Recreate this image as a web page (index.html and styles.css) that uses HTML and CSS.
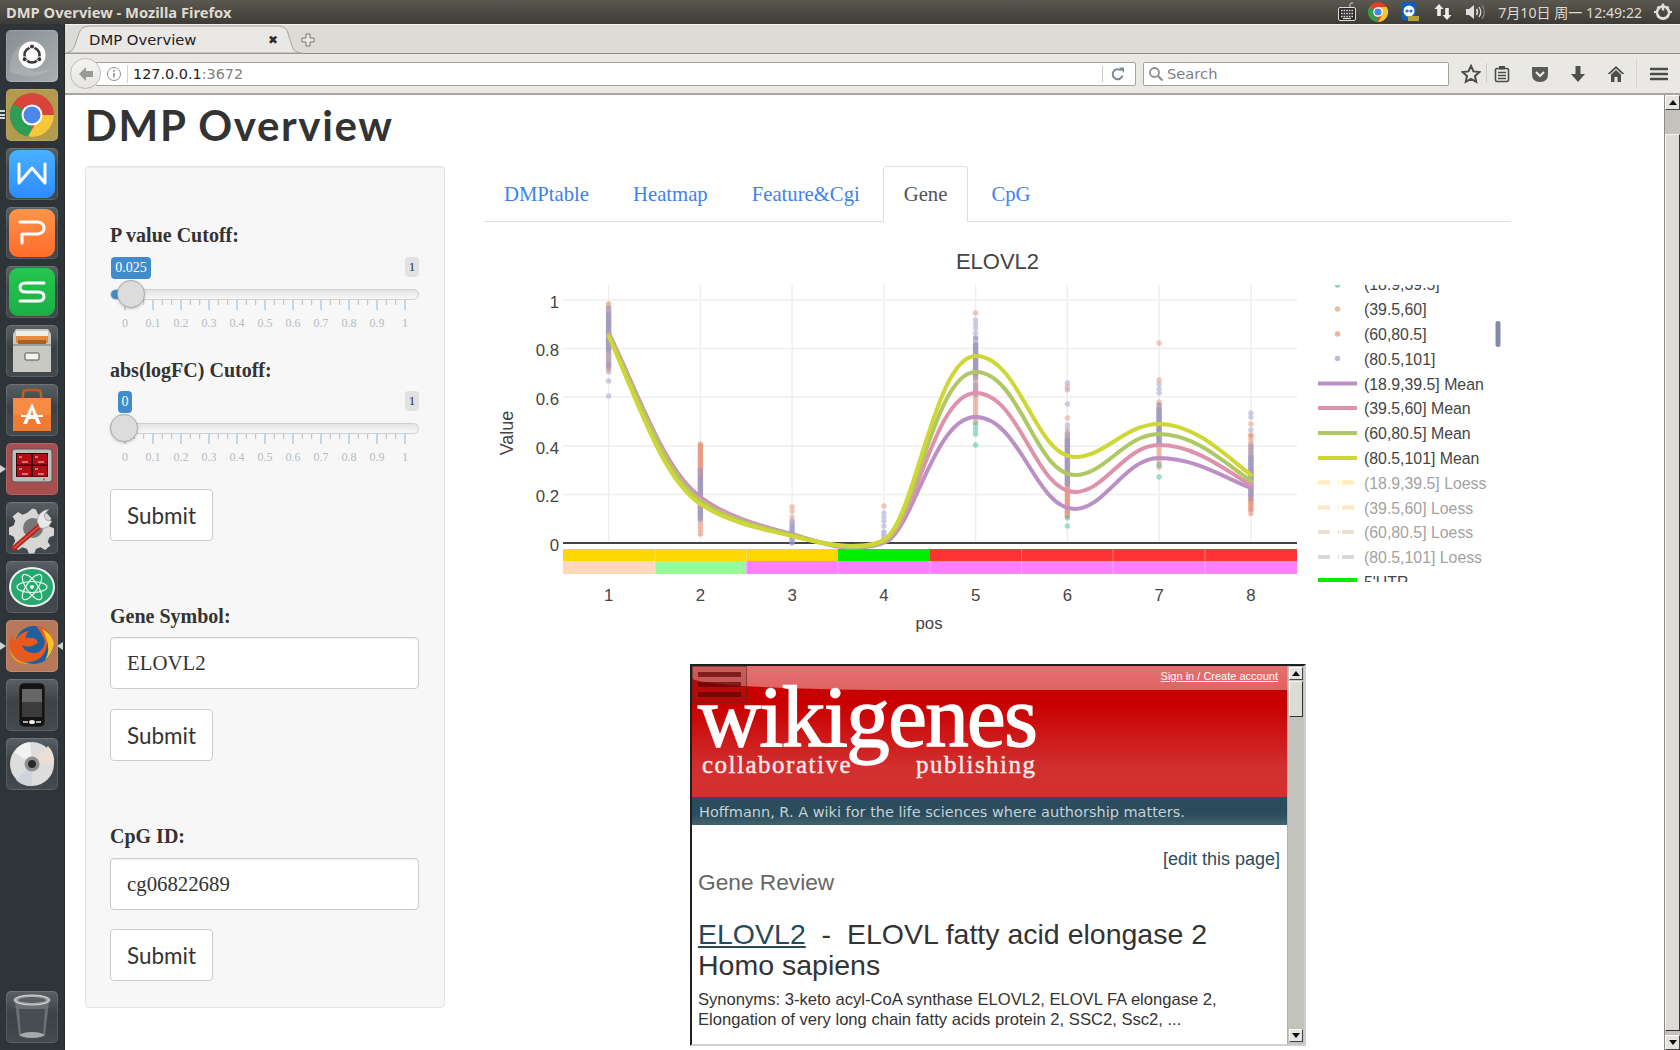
FILE: index.html
```html
<!DOCTYPE html>
<html lang="en">
<head>
<meta charset="utf-8">
<title>DMP Overview - Mozilla Firefox</title>
<link rel="stylesheet" href="styles.css">
</head>
<body>
<header class="topbar">
  <div class="wintitle">DMP Overview - Mozilla Firefox</div>
  <div class="tray">
    <svg class="ti kb" width="20" height="22" viewBox="0 0 20 22"><path d="M13 6V3.5Q13 2 15 2h1" fill="none" stroke="#ddd" stroke-width="1"/><rect x="1.5" y="6.5" width="17" height="13" rx="1.5" fill="#2c2b28" stroke="#ddd"/><path d="M4 9.5h12M4 12.5h12M4 15.5h12" stroke="#ddd" stroke-width="1.6" stroke-dasharray="1.6 1"/><path d="M6 17.5h8" stroke="#ddd" stroke-width="1.2"/></svg>
    <svg class="ti" width="22" height="22" viewBox="0 0 22 22"><circle cx="11" cy="11" r="10" fill="#e33e2b"/><path d="M11 11L2.3 16 8 20.5A10 10 0 0 0 11 21z" fill="#2f9e4f"/><path d="M2.3 6A10 10 0 0 0 6 19.7L11 11z" fill="#2f9e4f"/><path d="M11 6h8.7A10 10 0 0 1 11 21l4.3-7.5z" fill="#f7c52c"/><circle cx="11" cy="11" r="4.8" fill="#fff"/><circle cx="11" cy="11" r="3.6" fill="#4a86e8"/></svg>
    <svg class="ti" width="20" height="22" viewBox="0 0 20 22"><rect x="1" y="1" width="14" height="18" fill="#0a5fc4"/><circle cx="8" cy="10" r="5.5" fill="#fff"/><path d="M4 10l2.5-2v1.4h3V8l2.5 2-2.500 2v-1.400h-3V12z" fill="#0a5fc4"/><rect x="7" y="15" width="11" height="5" fill="#b5a23a"/></svg>
    <svg class="ti" width="20" height="22" viewBox="0 0 20 22"><path d="M6 3l4.500 5H7.800v7H4.200V8H1.500zM14 19l4.500-5h-2.700V7h-3.600v7H9.500z" fill="#eee"/></svg>
    <svg class="ti" width="22" height="22" viewBox="0 0 22 22"><path d="M1 8h3l5-4v14l-5-4H1z" fill="#ddd"/><path d="M11.500 8q2 3 0 6" fill="none" stroke="#ddd" stroke-width="1.500"/><path d="M14 6q3.500 5 0 10" fill="none" stroke="#ddd" stroke-width="1.300"/><path d="M17 4q4.500 7 0 14" fill="none" stroke="#8a8985" stroke-width="1.200"/></svg>
    <span class="clock">7月10日 周一 12:49:22</span>
    <svg class="ti gear" width="18" height="20" viewBox="0 0 18 20"><path d="M9 4.500a6 6 0 1 1-.01 0z" fill="none" stroke="#ddd" stroke-width="2.600"/><path d="M9 1.500v7" stroke="#ddd" stroke-width="2.400"/><path d="M9 2v3M9 15v3M2 10H0M18 10h-2M3.500 4.500l1.500 1.500M14.500 4.500L13 6M3.500 15.500L5 14M14.500 15.500L13 14" stroke="#ddd" stroke-width="2.200"/></svg>
  </div>
</header>
<div class="desktop">
  <aside class="launcher">
    <i class="pips"></i>
    <div class="tile dash"><svg viewBox="0 0 52 52"><path d="M4 42Q2 16 26 10q-14 12-6 26 8 10 26 2-16 14-42 4z" fill="#fff" opacity=".14"/><circle cx="26" cy="25" r="13.500" fill="#fff"/><circle cx="26" cy="25" r="7.500" fill="none" stroke="#3a3a3a" stroke-width="2.600"/><g fill="#3a3a3a" stroke="#fff"><circle cx="26" cy="16.500" r="2.500"/><circle cx="18.700" cy="29.200" r="2.500"/><circle cx="33.300" cy="29.200" r="2.500"/></g></svg></div>
    <div class="tile chrome"><svg viewBox="0 0 52 52"><circle cx="26" cy="26" r="22" fill="#d8433a"/><path d="M26 26L7 15A22 22 0 0 0 26 48z" fill="#2f9e55"/><path d="M26 26h22A22 22 0 0 1 22 47.600L32 30z" fill="#f6c73b"/><circle cx="26" cy="26" r="10.500" fill="#fff"/><circle cx="26" cy="26" r="8.500" fill="#4c86e8"/></svg></div>
    <div class="tile"><div class="app wps-w"><svg viewBox="0 0 46 48"><path d="M10 14V33L23 18 36 33V14" fill="none" stroke="#fff" stroke-width="3" stroke-linejoin="round" stroke-linecap="round"/></svg></div></div>
    <div class="tile"><div class="app wps-p"><svg viewBox="0 0 46 48"><path d="M13 34V25h16q6-1 6-6t-6-6H11" fill="none" stroke="#fff" stroke-width="3" stroke-linejoin="round" stroke-linecap="round"/></svg></div></div>
    <div class="tile"><div class="app wps-s"><svg viewBox="0 0 46 48"><path d="M35 15H17q-6 0-6 4.500t6 4.500h12q6 0 6 4.500T29 33H11" fill="none" stroke="#fff" stroke-width="3" stroke-linecap="round"/></svg></div></div>
    <div class="tile"><svg viewBox="0 0 52 52"><path d="M7 9l3-5h32l3 5v38H7z" fill="#c9c9c4"/><rect x="10" y="6" width="32" height="11" fill="#eeeeec"/><rect x="10" y="11" width="32" height="7" fill="#e98b3d"/><rect x="12" y="15" width="28" height="4" fill="#a5602b"/><path d="M7 19h38v2H7z" fill="#9c9c98"/><rect x="19" y="28" width="14" height="7" rx="1" fill="#f3f3f1" stroke="#555"/></svg></div>
    <div class="tile"><svg viewBox="0 0 52 52"><path d="M17 14v-4q0-4 4-4h10q4 0 4 4v4" fill="none" stroke="#c45a22" stroke-width="2.500"/><path d="M7 14h38v33H7z" fill="#ee7b34"/><path d="M7 14h38l-1 17H8z" fill="#f68b44"/><path d="M26 19l-9 21h4l2-5h6l2 5h4zM24.500 31l1.500-5 1.500 5z" fill="#fff"/><path d="M15 32h22" stroke="#fff" stroke-width="2"/></svg></div>
    <div class="tile redtile"><svg viewBox="0 0 52 52"><rect x="6" y="6" width="40" height="33" rx="3" fill="#bdbdb9" stroke="#555"/><rect x="10" y="10" width="32" height="24" fill="#3a0606"/><g fill="#b40d17"><rect x="11" y="11" width="14" height="10.500"/><rect x="27" y="11" width="14" height="10.500"/><rect x="11" y="23" width="14" height="10.500"/><rect x="27" y="23" width="14" height="10.500"/></g><path d="M13 14h3M29 14h3M13 26h3M29 26h3M16 19h6M32 19h6M16 31h6M32 31h6" stroke="#f3d7d7"/><circle cx="38" cy="36.500" r="1" fill="#d33"/></svg></div>
    <div class="tile"><svg viewBox="0 0 52 52"><path d="M26 5l4 1 2 5 5 2 5-3 5 6-3 5 1 4 5 2v8l-5 2-2 5 3 4-6 5-5-3-5 2-2 5h-6l-2-5-5-2-5 3-6-5 3-5-2-5-5-2v-8l5-2 2-5-3-5 6-5 5 3 5-2z" fill="#d6d6d4" transform="translate(3 2) scale(.9)"/><circle cx="27" cy="26" r="10" fill="#777"/><path d="M8 46l28-24" stroke="#b5261d" stroke-width="5" stroke-linecap="round"/><path d="M8 46l28-24" stroke="#e25a4f" stroke-width="1.500"/><path d="M31 19q1-10 12-12l-5 6 2 5 6 1q-4 9-12 7z" fill="#e9e9e7" stroke="#888" stroke-width=".6"/></svg></div>
    <div class="tile"><svg viewBox="0 0 52 52"><ellipse cx="26" cy="26" rx="23" ry="20" fill="#f1f4f2"/><ellipse cx="26" cy="26" rx="21" ry="18" fill="#27a86f"/><g fill="none" stroke="#e8f6ef" stroke-width="1.200"><ellipse cx="26" cy="26" rx="15" ry="5.500"/><ellipse cx="26" cy="26" rx="15" ry="5.500" transform="rotate(55 26 26)"/><ellipse cx="26" cy="26" rx="15" ry="5.500" transform="rotate(-55 26 26)"/></g><circle cx="26" cy="26" r="2" fill="#e8f6ef"/></svg></div>
    <div class="tile fftile"><svg viewBox="0 0 52 52"><circle cx="28" cy="25" r="19" fill="#1f5f9f"/><path d="M30 6q14 2 18 17-3-7-9-8 4 6 1 14-5 14-21 13-10-2-15-11Q1 24 7 15q0 5 2 6 5-9 14-10-4 4-3 7 5-1 10 1l2 4q-9 6-16 2 3 9 14 8 8-2 9-12-3-8-9-15z" fill="#e8591e"/><path d="M36 9q9 4 12 14-2 12-9 17 6-10 1-22-2-6-4-9z" fill="#fbc123"/><path d="M4 27q2 15 20 17-13 1-18-8-2-4-2-9z" fill="#f5a21a"/></svg></div>
    <div class="tile"><svg viewBox="0 0 52 52"><rect x="13" y="4" width="26" height="44" rx="5" fill="#141414" stroke="#555" stroke-width=".6"/><rect x="16" y="10" width="20" height="28" fill="#3c3c3c"/><path d="M16 10h20v13H16z" fill="#666"/><path d="M17 43h5M30 43h5" stroke="#ddd" stroke-width="1.500"/><ellipse cx="26" cy="43" rx="3" ry="2" fill="#eee"/></svg></div>
    <div class="tile"><svg viewBox="0 0 52 52"><circle cx="26" cy="26" r="22" fill="#ddd"/><path d="M26 26L42 8A22 22 0 0 1 48 26z" fill="#eadfd6"/><path d="M26 26L10 42A22 22 0 0 0 26 48z" fill="#cfd3da"/><path d="M26 26L8 14A22 22 0 0 1 24 4z" fill="#f2f2f2"/><circle cx="26" cy="26" r="7.500" fill="#8f8f8f"/><circle cx="26" cy="26" r="4" fill="#2a2a2a"/></svg></div>
    <div class="tile trash"><svg viewBox="0 0 52 52"><path d="M9 11h34l-4 34H13z" fill="#6a7074"/><path d="M13 18l2 26h22l2-26z" fill="#474d51"/><ellipse cx="26" cy="9" rx="18" ry="5" fill="#a8acad" stroke="#d6d6d4"/><ellipse cx="26" cy="9" rx="14" ry="3" fill="#5a5f63"/><ellipse cx="26" cy="44" rx="12" ry="3" fill="#a8aaa9"/></svg></div>
    <i class="arrow a1"></i><i class="arrow a2"></i><i class="arrow a3"></i>
  </aside>
  <div class="browser">
    <div class="tabstrip">
      <div class="fftab">
        <svg class="tabshape" width="236" height="29" viewBox="0 0 236 29"><path d="M0 28q6 0 9-8L13 8Q15 1 24 1h188q8 0 10 7l4 13q2 7 10 7z" fill="#e9e8e4" stroke="#a5a39c"/></svg>
        <span class="tabname">DMP Overview</span>
        <span class="tabclose">✖</span>
      </div>
      <svg class="plus" width="14" height="14" viewBox="0 0 14 14"><path d="M5 1h4v4h4v4H9v4H5V9H1V5h4z" fill="#e9e8e4" stroke="#77766f"/></svg>
    </div>
    <div class="navbar">
      <div class="urlbar">
        <svg class="info" width="16" height="16" viewBox="0 0 16 16"><circle cx="8" cy="8" r="6.500" fill="none" stroke="#8e8e8e"/><path d="M8 7v4.500" stroke="#8e8e8e" stroke-width="1.600"/><circle cx="8" cy="4.800" r="1" fill="#8e8e8e"/></svg>
        <span class="urltext">127.0.0.1<span class="urlport">:3672</span></span>
        <span class="urlsep"></span>
        <svg class="reload" width="16" height="16" viewBox="0 0 16 16"><path d="M12.500 9.500A5 5 0 1 1 11 4.500" fill="none" stroke="#7a8a99" stroke-width="2"/><path d="M9 1.500h5v5.500z" fill="#7a8a99"/></svg>
      </div>
      <button class="backbtn" aria-label="Back"><svg width="18" height="18" viewBox="0 0 18 18"><path d="M9 2L2 9l7 7V12h7V6H9z" fill="#9a9a96"/></svg></button>
      <div class="searchbar">
        <svg width="16" height="16" viewBox="0 0 16 16"><circle cx="6.500" cy="6.500" r="4.500" fill="none" stroke="#8e8e8e" stroke-width="1.800"/><path d="M10 10l4.500 4.500" stroke="#8e8e8e" stroke-width="2.200"/></svg>
        <span>Search</span>
      </div>
      <div class="navicons">
        <svg class="star" width="20" height="20" viewBox="0 0 20 20"><path d="M10 2l2.500 5.400 5.900.7-4.400 4 1.200 5.800L10 15l-5.200 2.900L6 12.100l-4.400-4 5.900-.7z" fill="none" stroke="#4b4b49" stroke-width="2"/></svg>
        <i class="vsep s1"></i>
        <svg class="clip" width="16" height="18" viewBox="0 0 16 18"><rect x="1.500" y="3.500" width="13" height="13" rx="1.500" fill="none" stroke="#4b4b49" stroke-width="1.600"/><rect x="5" y="1" width="6" height="3.500" fill="#4b4b49"/><path d="M4 7.500h8M4 10.500h8M4 13.500h8" stroke="#4b4b49" stroke-width="1.500"/></svg>
        <svg class="pocket" width="18" height="18" viewBox="0 0 18 18"><path d="M1 2h16v7q0 8-8 8T1 9z" fill="#5a5a58"/><path d="M5 7l4 4 4-4" fill="none" stroke="#e9e8e4" stroke-width="2.200"/></svg>
        <svg class="down" width="16" height="18" viewBox="0 0 16 18"><path d="M5.500 1h5v8H15l-7 8-7-8h4.500z" fill="#4f4f4d"/></svg>
        <svg class="home" width="18" height="18" viewBox="0 0 18 18"><path d="M9 1L0.500 9h2.500L9 3.500 15 9h2.500z" fill="#4f4f4d"/><path d="M9 5l-5 4.500V17h3.500v-5h3v5H14V9.500z" fill="#4f4f4d"/></svg>
        <i class="vsep s2"></i>
        <svg class="menu" width="18" height="14" viewBox="0 0 18 14"><path d="M1 2h16M1 7h16M1 12h16" stroke="#4b4b49" stroke-width="2.600" stroke-linecap="round"/></svg>
      </div>
    </div>
    <div class="viewport">
      <main class="page">
        <h1 class="pagetitle">DMP Overview</h1>
        <div class="columns">
          <form class="sidebar">
            <label class="lab first">P value Cutoff:</label>
            <div class="slider">
              <div class="badges"><span class="maxbadge">1</span></div>
              <span class="valbadge v1">0.025</span>
              <div class="track"><div class="fill f1"></div></div>
              <div class="handle h1"></div>
              <svg class="ticks" width="309" height="36" viewBox="110 0 309 36">
                <path class="minor" d="M134.300 0v5M143.700 0v5M162.300 0v5M171.700 0v5M190.300 0v5M199.700 0v5M218.300 0v5M227.700 0v5M246.300 0v5M255.700 0v5M274.300 0v5M283.700 0v5M302.300 0v5M311.700 0v5M330.300 0v5M339.700 0v5M358.300 0v5M367.700 0v5M386.300 0v5M395.700 0v5"/>
                <path class="major" d="M125 0v10M153 0v10M181 0v10M209 0v10M237 0v10M265 0v10M293 0v10M321 0v10M349 0v10M377 0v10M405 0v10"/>
                <g class="ticklab"><text x="125" y="27">0</text><text x="153" y="27">0.1</text><text x="181" y="27">0.2</text><text x="209" y="27">0.3</text><text x="237" y="27">0.4</text><text x="265" y="27">0.5</text><text x="293" y="27">0.6</text><text x="321" y="27">0.7</text><text x="349" y="27">0.8</text><text x="377" y="27">0.9</text><text x="405" y="27">1</text></g>
              </svg>
            </div>
            <label class="lab second">abs(logFC) Cutoff:</label>
            <div class="slider">
              <div class="badges"><span class="maxbadge">1</span></div>
              <span class="valbadge v2">0</span>
              <div class="track"></div>
              <div class="handle h2"></div>
              <svg class="ticks" width="309" height="36" viewBox="110 0 309 36">
                <path class="minor" d="M134.300 0v5M143.700 0v5M162.300 0v5M171.700 0v5M190.300 0v5M199.700 0v5M218.300 0v5M227.700 0v5M246.300 0v5M255.700 0v5M274.300 0v5M283.700 0v5M302.300 0v5M311.700 0v5M330.300 0v5M339.700 0v5M358.300 0v5M367.700 0v5M386.300 0v5M395.700 0v5"/>
                <path class="major" d="M125 0v10M153 0v10M181 0v10M209 0v10M237 0v10M265 0v10M293 0v10M321 0v10M349 0v10M377 0v10M405 0v10"/>
                <g class="ticklab"><text x="125" y="27">0</text><text x="153" y="27">0.1</text><text x="181" y="27">0.2</text><text x="209" y="27">0.3</text><text x="237" y="27">0.4</text><text x="265" y="27">0.5</text><text x="293" y="27">0.6</text><text x="321" y="27">0.7</text><text x="349" y="27">0.8</text><text x="377" y="27">0.9</text><text x="405" y="27">1</text></g>
              </svg>
            </div>
            <button type="button" class="submit s-first">Submit</button>
            <label class="lab section">Gene Symbol:</label>
            <input class="field" value="ELOVL2">
            <button type="button" class="submit">Submit</button>
            <label class="lab section last">CpG ID:</label>
            <input class="field" value="cg06822689">
            <button type="button" class="submit final">Submit</button>
          </form>
          <section class="content">
            <nav class="tabs">
              <a class="tablink">DMPtable</a>
              <a class="tablink">Heatmap</a>
              <a class="tablink">Feature&amp;Cgi</a>
              <a class="tablink active">Gene</a>
              <a class="tablink">CpG</a>
            </nav>
            <svg class="plot" width="1027" height="442" viewBox="484 222 1027 442">
              <defs><clipPath id="lg"><rect x="1310" y="285" width="200" height="297"/></clipPath></defs>
              <text class="ptitle" x="997.500" y="269">ELOVL2</text>
              <path class="grid" d="M608.600 285V543M700.400 285V543M792.100 285V543M883.900 285V543M975.600 285V543M1067.400 285V543M1159.100 285V543M1250.900 285V543"/>
              <path class="grid" d="M563 300H1297M563 348.500H1297M563 397H1297M563 446H1297M563 494.500H1297"/>
              <g class="bars">
                <rect x="563" y="549" width="275" height="12" fill="#ffd700"/>
                <rect x="838" y="549" width="92" height="12" fill="#00ee00"/>
                <rect x="930" y="549" width="367" height="12" fill="#ff3333"/>
                <rect x="563" y="561" width="92" height="13" fill="#ffd7b9"/>
                <rect x="655" y="561" width="91" height="13" fill="#98fb98"/>
                <rect x="746" y="561" width="551" height="13" fill="#ff80ff"/>
                <path d="M655 549v25M746.500 549v25M838 561v13M930 561v13M1021.500 549v25M1113 549v25M1205 549v25" stroke="#fff" stroke-opacity=".35"/>
              </g>
              <path class="zero" d="M563 543H1297"/>
              <g class="dots">
                <path class="d-b" d="M608.600 381h0M608.600 396h0M608.600 372h0M608.600 365h0"/>
                <path class="col c-o" d="M608.600 304V372"/><path class="col c-b" d="M608.600 308V368"/><path class="col c-b" d="M608.600 315V352"/>
                <path class="col c-o" d="M700.400 444V534"/><path class="col c-o" d="M700.400 446V480"/><path class="col c-b" d="M700.400 470V522"/><path class="col c-b" d="M700.400 480V518"/>
                <path class="d-o" d="M792.100 507h0M792.100 511h0M792.100 517h0M792.100 523h0"/><path class="col c-b" d="M792.100 521V544"/><path class="col c-b" d="M792.100 527V544"/>
                <path class="d-o" d="M883.900 506h0"/><path class="d-b" d="M883.900 513h0M883.900 517h0M883.900 521h0M883.900 526h0"/><path class="col c-b" d="M883.900 532V544"/>
                <path class="d-o" d="M975.600 313h0"/><path class="d-b" d="M975.600 320h0M975.600 324h0M975.600 328h0M975.600 333h0M975.600 338h0"/>
                <path class="col c-o" d="M975.600 345V425"/><path class="col c-b" d="M975.600 338V380"/><path class="col c-b" d="M975.600 345V375"/><path class="col c-b" d="M975.600 385V395"/>
                <path class="d-t" d="M975.600 424h0M975.600 428h0M975.600 431h0M975.600 434h0M975.600 445h0"/>
                <path class="d-b" d="M1067.400 383h0M1067.400 390h0M1067.400 404h0M1067.400 425h0M1067.400 428h0"/><path class="d-o" d="M1067.400 387h0M1067.400 418h0"/>
                <path class="col c-o" d="M1067.400 432V518"/><path class="col c-b" d="M1067.400 434V486"/><path class="col c-b" d="M1067.400 440V485"/><path class="col c-o" d="M1067.400 488V516"/>
                <path class="d-t" d="M1067.400 518h0M1067.400 526h0"/>
                <path class="d-o" d="M1159.100 343h0M1159.100 380h0M1159.100 402h0"/><path class="d-b" d="M1159.100 384h0M1159.100 389h0M1159.100 393h0"/>
                <path class="col c-o" d="M1159.100 405V470"/><path class="col c-b" d="M1159.100 405V445"/><path class="col c-b" d="M1159.100 410V442"/>
                <path class="d-t" d="M1159.100 465h0M1159.100 477h0"/>
                <path class="d-b" d="M1250.900 413h0M1250.900 417h0M1250.900 430h0"/><path class="d-o" d="M1250.900 424h0M1250.900 435h0"/>
                <path class="col c-o" d="M1250.900 436V514"/><path class="col c-b" d="M1250.900 446V500"/><path class="col c-b" d="M1250.900 458V498"/><path class="col c-o" d="M1250.900 500V512"/>
              </g>
              <g class="means">
                <path stroke="#bc8fc5" d="M608.600 333C640 397 665 472 700.400 497C725 516 760 526 792 534C815 541 835 548 851 548C868 548 878 546 888 541C915 522 935 417 975.600 417C1020 417 1035 509 1075 509C1105 509 1125 458 1159 458C1195 458 1225 478 1251 488"/>
                <path stroke="#de93ac" d="M608.600 334C640 398 665 474 700.400 499C725 517 760 527 792 535C815 541 835 547 851 547C868 547 878 545 887 540C915 521 935 393 975.600 393C1020 393 1035 492 1075 492C1105 492 1125 445 1159 445C1195 445 1225 470 1251 485"/>
                <path stroke="#afc864" d="M608.600 335C640 400 665 476 700.400 501C725 519 760 527 792 535C815 541 835 547 851 547C868 547 878 545 886 540C915 520 935 372 975.600 372C1020 372 1035 475 1075 475C1105 475 1125 434 1159 434C1195 434 1225 463 1251 481"/>
                <path stroke="#cfd736" d="M608.600 336C638 402 663 480 700.400 504C725 521 760 529 792 536C815 542 835 546 851 546C868 546 878 544 885 539C915 519 935 356 975.600 356C1020 356 1035 457 1075 457C1105 457 1125 424 1159 424C1195 424 1225 455 1251 475"/>
              </g>
              <g class="axlab">
                <text class="ytick" x="559" y="308">1</text><text class="ytick" x="559" y="356">0.8</text><text class="ytick" x="559" y="405">0.6</text><text class="ytick" x="559" y="454">0.4</text><text class="ytick" x="559" y="502">0.2</text><text class="ytick" x="559" y="551">0</text>
                <text class="xtick" x="608.600" y="601">1</text><text class="xtick" x="700.400" y="601">2</text><text class="xtick" x="792.100" y="601">3</text><text class="xtick" x="883.900" y="601">4</text><text class="xtick" x="975.600" y="601">5</text><text class="xtick" x="1067.400" y="601">6</text><text class="xtick" x="1159.100" y="601">7</text><text class="xtick" x="1250.900" y="601">8</text>
                <text class="xtick" x="929" y="629">pos</text>
                <text class="xtick vlab" transform="translate(513 433) rotate(-90)">Value</text>
              </g>
              <g clip-path="url(#lg)" class="legend">
                <path class="lg-dot" stroke="#8dd3be" d="M1337.500 285h0"/><text x="1364" y="290">(18.9,39.5]</text>
                <path class="lg-dot" stroke="#e3bfa3" d="M1337.500 309h0"/><text x="1364" y="314.500">(39.5,60]</text>
                <path class="lg-dot" stroke="#efb3a0" d="M1337.500 334h0"/><text x="1364" y="339.500">(60,80.5]</text>
                <path class="lg-dot" stroke="#b9bddb" d="M1337.500 358.500h0"/><text x="1364" y="364.500">(80.5,101]</text>
                <path class="lg-line" stroke="#bc8fc5" d="M1318 383.500h39"/><text x="1364" y="389.500">(18.9,39.5] Mean</text>
                <path class="lg-line" stroke="#de93ac" d="M1318 408h39"/><text x="1364" y="413.500">(39.5,60] Mean</text>
                <path class="lg-line" stroke="#afc864" d="M1318 433h39"/><text x="1364" y="438.500">(60,80.5] Mean</text>
                <path class="lg-line" stroke="#cfd736" d="M1318 458h39"/><text x="1364" y="463.500">(80.5,101] Mean</text>
                <g class="off">
                  <path class="lg-dash" stroke="#fedc62" d="M1318 482.500h36"/><text x="1364" y="488.500">(18.9,39.5] Loess</text>
                  <path class="lg-dash" stroke="#f8cf8d" d="M1318 507.500h36"/><text x="1364" y="513.500">(39.5,60] Loess</text>
                  <path class="lg-dash" stroke="#d9c3a5" d="M1318 532h36"/><text x="1364" y="537.500">(60,80.5] Loess</text>
                  <path class="lg-dash" stroke="#b3b3b3" d="M1318 557h36"/><text x="1364" y="562.500">(80.5,101] Loess</text>
                </g>
                <path class="lg-bar" d="M1318 581.500h39"/><text x="1364" y="587.500">5'UTR</text>
              </g>
              <rect class="lgscroll" x="1495.500" y="321" width="5" height="26" rx="2"/>
            </svg>
            <div class="frame">
              <div class="framepage">
                <div class="wghead">
                  <div class="gloss"></div>
                  <div class="wgmenu"><i></i><i></i><i></i></div>
                  <a class="signin">Sign in / Create account</a>
                  <div class="wordmark">wikigenes</div>
                  <div class="subs"><span>collaborative</span><span>publishing</span></div>
                </div>
                <div class="wgtag">Hoffmann, R. A wiki for the life sciences where authorship matters.</div>
                <div class="wgbody">
                  <a class="edit">[edit this page]</a>
                  <div class="review">Gene Review</div>
                  <h2 class="genename"><a>ELOVL2</a>&nbsp; - &nbsp;ELOVL fatty acid elongase 2<br>Homo sapiens</h2>
                  <p class="syn">Synonyms: 3-keto acyl-CoA synthase ELOVL2, ELOVL FA elongase 2, Elongation of very long chain fatty acids protein 2, SSC2, Ssc2, ...</p>
                </div>
              </div>
              <div class="framescroll">
                <span class="sb-btn small up"></span>
                <span class="sb-thumb small"></span>
                <span class="sb-grow"></span>
                <span class="sb-btn small dn"></span>
              </div>
            </div>
          </section>
        </div>
      </main>
      <div class="pagescroll">
        <span class="sb-btn up"></span>
        <span class="sb-track"></span>
        <span class="sb-thumb big"></span>
        <span class="sb-track tiny"></span>
        <span class="sb-btn dn"></span>
      </div>
    </div>
  </div>
</div>
</body>
</html>
```
FILE: styles.css
```css
* { box-sizing: border-box; }
html, body { margin: 0; height: 100%; }
body { width: 1680px; height: 1050px; overflow: hidden; display: flex; flex-direction: column; background: #fff; font-family: "Liberation Serif", serif; color: #333; }

/* top panel */
.topbar { height: 24px; flex: none; display: flex; align-items: center; justify-content: space-between; background: linear-gradient(#5b5850, #3c3b35); padding: 0 8px 0 6px; }
.wintitle { font: 700 14.700px "Noto Sans", sans-serif; color: #dfdbd2; white-space: nowrap; }
.tray { display: flex; align-items: center; }
.ti { display: block; margin-right: 12px; }
.kb { margin-right: 10px; }
.clock { font: 14.100px "Noto Sans", "Noto Sans CJK SC", sans-serif; color: #dfdbd2; margin: 0 12px 0 -1px; white-space: nowrap; }
.gear { margin-right: 0; }

.desktop { flex: 1; display: flex; min-height: 0; }

/* launcher */
.launcher { width: 65px; flex: none; background: #2e3539; padding-top: 6px; display: flex; flex-direction: column; align-items: flex-start; position: relative; border-right: 1px solid #23282b; }
.tile { width: 52px; height: 52px; margin: 0 0 7px 6px; border-radius: 5px; background: linear-gradient(#5a6064, #3b4145 45%, #454a4e); box-shadow: inset 0 0 0 1px rgba(255,255,255,.12); display: flex; align-items: center; justify-content: center; flex: none; overflow: hidden; }
.tile > svg { width: 52px; height: 52px; display: block; }
.dash { background: linear-gradient(135deg, #868e91, #aab0b2); }
.chrome { background: #b29a4e; }
.redtile { background: #a84e50; }
.fftile { background: #b8795a; }
.trash { margin-top: auto; margin-bottom: 7px; }
.app { width: 46px; height: 48px; border-radius: 9px; }
.app svg { width: 46px; height: 48px; display: block; }
.wps-w { background: linear-gradient(#48b0ff, #2e8cff); }
.wps-p { background: linear-gradient(#ff9448, #ff6c2c); }
.wps-s { background: linear-gradient(#26c64e, #1aaf46); }
.pips { position: absolute; left: 0; top: 86px; width: 5px; height: 9px; background: repeating-linear-gradient(#d8d8d8 0 2px, transparent 2px 3.5px); }
.arrow { position: absolute; width: 0; height: 0; border-top: 4px solid transparent; border-bottom: 4px solid transparent; }
.a1 { left: 0; top: 441px; border-left: 6px solid #cfd2d3; }
.a2 { left: 0; top: 618px; border-left: 6px solid #cfd2d3; }
.a3 { right: 1px; top: 618px; border-right: 6px solid #cfd2d3; }

/* browser chrome */
.browser { flex: 1; min-width: 0; display: flex; flex-direction: column; }
.tabstrip { height: 30px; flex: none; background: #dcdbd5; border-top: 1px solid #f4f3ef; border-bottom: 1px solid #8f8d87; display: flex; align-items: flex-end; padding-left: 1px; }
.fftab { position: relative; width: 236px; height: 29px; display: flex; align-items: center; padding: 0 24px 0 23px; justify-content: space-between; margin-bottom: -1px; }
.tabshape { position: absolute; left: 0; top: 0; }
.tabname, .tabclose { position: relative; }
.tabname { font: 14.800px "DejaVu Sans", sans-serif; color: #222; }
.tabclose { font: 12px "DejaVu Sans", sans-serif; color: #2c2c2c; }
.plus { margin: 0 0 6px -1px; }
.navbar { height: 41px; flex: none; background: #e9e8e4; border-bottom: 2px solid #a8a69f; display: flex; align-items: center; padding-left: 5px; position: relative; }
.backbtn { position: absolute; left: 5px; top: 4px; width: 31px; height: 31px; padding: 0; border-radius: 50%; border: 1px solid #bdbcb6; background: linear-gradient(#f5f4f1, #e6e5e1); display: flex; align-items: center; justify-content: center; }
.urlbar { margin-left: 25px; width: 1041px; height: 24px; background: #fff; border: 1px solid #a5a39c; border-radius: 2px; display: flex; align-items: center; padding-left: 10px; }
.info { margin-right: 5px; flex: none; }
.urltext { border-left: 1px solid #d2d2d0; padding-left: 5px; height: 18px; font: 14.400px/18px "DejaVu Sans", sans-serif; color: #222; }
.urlport { color: #808080; }
.urlsep { margin-left: auto; width: 1px; height: 16px; background: #c8c8c6; }
.reload { margin: 0 9px 0 7px; }
.searchbar { margin-left: 7px; width: 306px; height: 24px; background: #fff; border: 1px solid #a5a39c; border-radius: 2px; display: flex; align-items: center; padding-left: 4px; gap: 3px; font: 14.700px "DejaVu Sans", sans-serif; color: #808080; }
.navicons { flex: 1; position: relative; height: 100%; }
.navicons svg, .vsep { position: absolute; }
.star { left: 12px; top: 10px; }
.s1 { left: 37px; top: 9px; width: 1px; height: 20px; background: #cfcec9; }
.clip { left: 45px; top: 11px; }
.pocket { left: 82px; top: 11px; }
.down { left: 121px; top: 11px; }
.home { left: 158px; top: 11px; }
.s2 { left: 187px; top: 4px; width: 1px; height: 30px; background: #d6d5d0; }
.menu { left: 201px; top: 13px; }

.viewport { flex: 1; min-height: 0; display: flex; }
.page { flex: 1; min-width: 0; padding-left: 20px; overflow: hidden; }
.pagetitle { margin: 0; height: 71px; font: 700 42px/60px Lato, sans-serif; letter-spacing: 1.650px; color: #333; }
.columns { display: flex; gap: 39px; align-items: flex-start; }

/* sidebar */
.sidebar { width: 360px; flex: none; height: 842px; background: #f7f7f7; border: 1px solid #e3e3e3; border-radius: 4px; box-shadow: inset 0 1px 1px rgba(0,0,0,.05); padding: 57px 25px 0 24px; display: flex; flex-direction: column; align-items: flex-start; }
.lab { display: block; font: 700 20px/23px "Liberation Serif", serif; color: #333; margin-bottom: 10px; }
.second { margin-top: 1px; margin-bottom: 9px; }
.section { margin-top: 64px; margin-bottom: 9px; }
.last { margin-bottom: 10px; }
.slider { position: relative; width: 309px; height: 75px; margin-bottom: 26px; }
.slider + .submit { margin-top: -3px; }
.badges { display: flex; justify-content: flex-end; height: 32px; }
.maxbadge { width: 14px; height: 20px; background: #e1e1e1; border-radius: 4px; text-align: center; font: 13px/20px "Liberation Serif", serif; color: #333; }
.valbadge { position: absolute; top: 0; height: 22px; background: #428bca; color: #fff; border-radius: 4px; text-align: center; font: 14px/21px "Liberation Serif", serif; }
.v1 { left: 1px; width: 40px; }
.v2 { left: 8px; width: 14px; }
.track { height: 11px; border: 1px solid #cfcfcf; border-radius: 6px; background: linear-gradient(#e4e4e4, #f8f8f8); position: relative; overflow: hidden; }
.fill { position: absolute; left: 0; top: 0; bottom: 0; background: #428bca; }
.f1 { width: 16px; }
.handle { position: absolute; width: 28px; height: 28px; top: 22.5px; border-radius: 50%; background: #dcdcdc; border: 1px solid #ababab; box-shadow: 0 1px 3px rgba(0,0,0,.2); }
.h1 { left: 7px; }
.h2 { left: 0; }
.ticks { display: block; }
.minor { stroke: #bdbdbd; stroke-width: 1; }
.major { stroke: #9dc3e2; stroke-width: 1.2; }
.ticklab text { font: 12px "Liberation Serif", serif; fill: #b4bcc4; text-anchor: middle; }
.submit { width: 103px; height: 52px; background: #fff; border: 1px solid #ccc; border-radius: 4px; font: 22.500px Lato, sans-serif; color: #333; padding: 0; margin-top: 20px; }
.s-first { margin-top: 0; }
.final { margin-top: 19px; }
.field { width: 309px; height: 52px; background: #fff; border: 1px solid #ccc; border-radius: 4px; font: 20.800px "Liberation Serif", serif; color: #333; padding: 0 16px; box-shadow: inset 0 1px 1px rgba(0,0,0,.075); margin: 0; display: block; }

/* main */
.content { width: 1027px; flex: none; }
.tabs { height: 56px; display: flex; align-items: flex-end; border-bottom: 1px solid #ddd; padding-left: 0; }
.tablink { height: 56px; padding: 0 20px; font: 20.700px/54px "Liberation Serif", serif; color: #4080f0; margin-right: 2px; margin-bottom: -1px; border: 1px solid transparent; }
.tablink:first-child { margin-left: -1px; }
.active { background: #fff; color: #555; border-color: #ddd; border-bottom-color: #fff; border-radius: 4px 4px 0 0; }
.plot { display: block; }
.plot text { font-family: "Liberation Sans", sans-serif; }
.ptitle { font-size: 22px; fill: #444; text-anchor: middle; }
.grid { stroke: #eee; stroke-width: 1.5; fill: none; }
.zero { stroke: #444; stroke-width: 2; }
.dots path { fill: none; stroke-linecap: round; stroke-width: 5.5; opacity: .55; }
.dots .col { stroke-dasharray: 0 3.100; }
.c-o { stroke: #e4866a; }
.c-b { stroke: #8f94c6; }
.d-o { stroke: #e59c82; }
.d-b { stroke: #a3a8d0; }
.d-t { stroke: #55c3a2; }
.means path { fill: none; stroke-width: 4; stroke-linecap: round; }
.ytick { font-size: 16.800px; fill: #444; text-anchor: end; }
.xtick { font-size: 16.800px; fill: #444; text-anchor: middle; }
.vlab { font-size: 18px; }
.legend text { font-size: 15.850px; fill: #444; }
.off { opacity: .5; }
.lg-dot { fill: none; stroke-width: 5.500; stroke-linecap: round; }
.lg-line { fill: none; stroke-width: 4; }
.lg-dash { fill: none; stroke-width: 4; stroke-dasharray: 12 8 1 3 12; }
.lg-bar { stroke: #00ee00; stroke-width: 7; }
.lgscroll { fill: #808ba5; }

/* embedded frame */
.frame { width: 616px; height: 382px; margin-left: 206px; display: flex; border-style: solid; border-width: 2px; border-color: #1f1f1f #cfcfcf #cfcfcf #1f1f1f; background: #fff; }
.framepage { flex: 1; min-width: 0; overflow: hidden; }
.wghead { height: 131px; position: relative; overflow: hidden; background: linear-gradient(#c90000 0, #c90000 30%, #d23030 78%, #d32f2f); }
.gloss { position: absolute; left: 0; right: 0; top: 0; height: 24px; background: linear-gradient(#e56f6f, #df6464); border-bottom-left-radius: 35% 12px; }
.wgmenu { position: absolute; left: 0; top: 0; width: 55px; height: 37px; background: rgba(120,40,40,.25); border: 1px solid rgba(100,30,30,.55); padding: 5px 5px; display: flex; flex-direction: column; gap: 5px; }
.wgmenu i { display: block; height: 5px; background: rgba(90,0,0,.65); }
.signin { position: absolute; right: 9px; top: 4px; font: 11px "Liberation Sans", sans-serif; color: #fff; text-decoration: underline; }
.wordmark { position: absolute; left: 6px; top: 16px; font: 400 87px/70px "Liberation Serif", serif; letter-spacing: -1.600px; color: #fff; -webkit-text-stroke: 1.400px #fff; white-space: nowrap; }
.subs { position: absolute; left: 10px; top: 89px; display: flex; gap: 64px; font: 400 25px/20px "Liberation Serif", serif; letter-spacing: 1.500px; color: #fbe9e9; -webkit-text-stroke: .4px #fbe9e9; }
.wgtag { height: 28px; background: linear-gradient(#2a4c5c 60%, #44626f); color: #c5d2d7; font: 14.500px/30px "DejaVu Sans", sans-serif; padding-left: 7px; white-space: nowrap; }
.wgbody { padding: 0 7px 0 6px; font-family: "Liberation Sans", sans-serif; }
.edit { display: block; text-align: right; font-size: 18px; line-height: 22px; color: #2b4c5e; padding-top: 23px; box-sizing: content-box; }
.review { font-size: 22.700px; line-height: 26px; color: #666; margin-top: -1px; }
.genename { font-weight: 400; font-size: 28.500px; line-height: 31px; margin: 24px 0 0; color: #333; }
.genename a { color: #26495c; text-decoration: underline; }
.syn { font-size: 16.600px; line-height: 19.500px; margin: 9px 0 0; color: #333; }

.framescroll { width: 17px; flex: none; background: #c3c2bc; display: flex; flex-direction: column; padding: 1px 1px 2px; border-left: 1px solid #b0afaa; }
.sb-btn { flex: none; height: 15px; background: #e5e4e0; border: 1px solid #fff; border-right-color: #444; border-bottom-color: #444; position: relative; display: block; }
.sb-btn.small { height: 13px; }
.sb-btn::after { content: ""; position: absolute; left: 50%; top: 50%; margin: -3px 0 0 -4px; border-left: 4px solid transparent; border-right: 4px solid transparent; }
.up::after { border-bottom: 5px solid #111; }
.dn::after { border-top: 5px solid #111; }
.sb-thumb { display: block; background: #dcdbd5; border: 1px solid #f4f4f0; border-right-color: #333; border-bottom-color: #333; }
.sb-thumb.small { height: 36px; margin-top: 1px; flex: none; }
.sb-grow { flex: 1; display: block; }
.pagescroll { width: 16px; flex: none; background: #c3c2bc; display: flex; flex-direction: column; border-left: 1px solid #8c8b86; }
.sb-track { height: 24px; flex: none; display: block; }
.sb-track.tiny { height: 4px; }
.sb-thumb.big { flex: 1; }
```
